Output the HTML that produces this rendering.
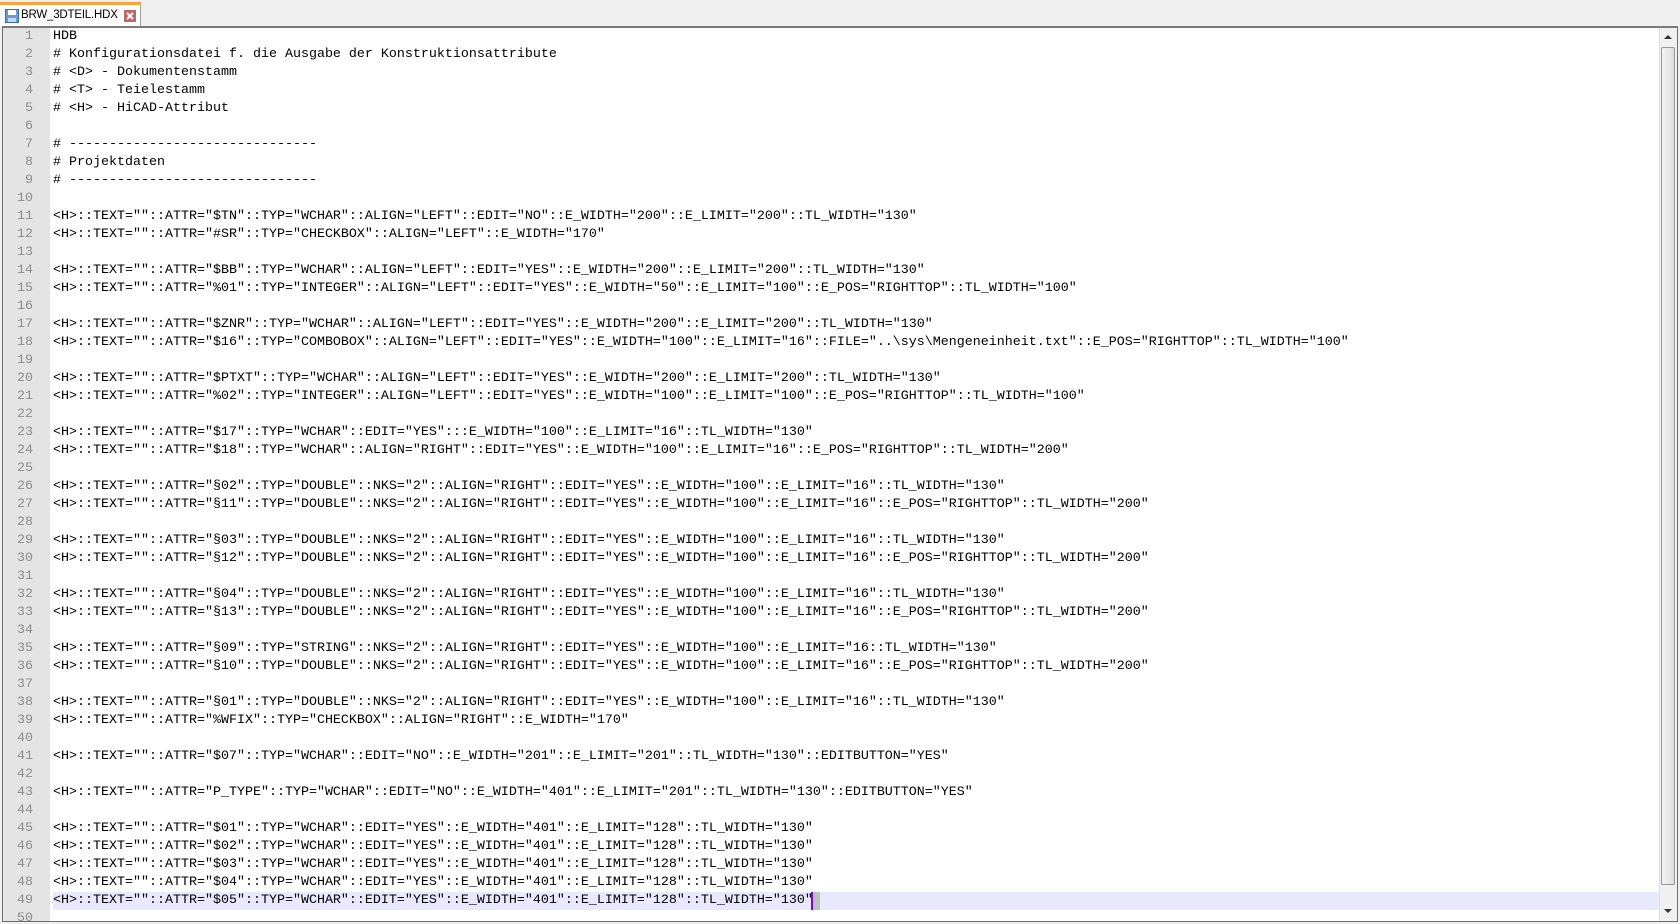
<!DOCTYPE html>
<html><head><meta charset="utf-8">
<style>
html,body{margin:0;padding:0;width:1680px;height:924px;overflow:hidden;background:#f0f0f0;font-family:"Liberation Sans",sans-serif}
#tab{position:absolute;left:0;top:2px;width:141px;height:24px;background:#fff;border-right:1px solid #a0a0a0;box-sizing:border-box}
#tab .o{position:absolute;left:0;top:0;width:141px;height:3px;background:#f7a23a}
#tab .t{position:absolute;left:21px;top:7px;font-size:11.5px;letter-spacing:-0.2px;color:#000;white-space:nowrap}
#ed{position:absolute;left:2px;top:26px;width:1676px;height:896px;border:1px solid #6d6d6d;border-top:2px solid #7a7a7a;background:#fff;box-sizing:border-box;overflow:hidden}
#mg{position:absolute;left:0;top:0;width:47px;height:100%;background:#e4e4e4}
.ln{position:absolute;left:0;width:30px;text-align:right;color:#8c8c8c;font:13.33px/18px "Liberation Mono",monospace}
.tx{position:absolute;left:50px;white-space:pre;color:#000;font:13.33px/18px "Liberation Mono",monospace}
#hl{position:absolute;left:50px;top:864px;width:1606px;height:18px;background:#e8e8ff}
#sb{position:absolute;right:0;top:0;width:17px;height:100%;background:#f0f0f0;border-left:1px solid #e0e0e0}
#th{position:absolute;left:1px;top:19px;width:14px;height:838px;background:linear-gradient(90deg,#f4f4f4,#dcdcdc);border:1px solid #979797;border-radius:2px;box-sizing:border-box}
</style></head><body>
<div id="tab"><div class="o"></div>
<svg style="position:absolute;left:5px;top:7px" width="14" height="14" viewBox="0 0 14 14"><rect x="0.5" y="0.5" width="13" height="13" fill="#6d9bd1" stroke="#3b6aa8"/><rect x="3" y="1" width="8" height="5" fill="#fff"/><rect x="3" y="9" width="8" height="4" fill="#c8d8ec"/></svg>
<div class="t">BRW_3DTEIL.HDX</div>
<svg style="position:absolute;left:124px;top:8px" width="12" height="12" viewBox="0 0 12 12"><rect width="12" height="12" fill="#b86a6a"/><path d="M3 3L9 9M9 3L3 9" stroke="#fff" stroke-width="2"/></svg>
</div>
<div id="ed">
<div id="mg"></div>
<div id="hl"></div>
<div id="lines"></div>
<div style="position:absolute;left:808px;top:864px;width:2px;height:18px;background:#8000ff"></div>
<div style="position:absolute;left:810px;top:864px;width:7px;height:18px;background:#c0c0c0"></div>
<div id="sb"><div style="position:absolute;left:4px;top:7px;width:0;height:0;border-left:4px solid transparent;border-right:4px solid transparent;border-bottom:4px solid #333"></div><div id="th"></div><div style="position:absolute;left:4px;top:881px;width:0;height:0;border-left:4px solid transparent;border-right:4px solid transparent;border-top:4px solid #333"></div></div>
</div>
<script>
var L=['HDB','# Konfigurationsdatei f. die Ausgabe der Konstruktionsattribute','# <D> - Dokumentenstamm','# <T> - Teielestamm','# <H> - HiCAD-Attribut','','# -------------------------------','# Projektdaten','# -------------------------------','',
'<H>::TEXT=""::ATTR="$TN"::TYP="WCHAR"::ALIGN="LEFT"::EDIT="NO"::E_WIDTH="200"::E_LIMIT="200"::TL_WIDTH="130"',
'<H>::TEXT=""::ATTR="#SR"::TYP="CHECKBOX"::ALIGN="LEFT"::E_WIDTH="170"','',
'<H>::TEXT=""::ATTR="$BB"::TYP="WCHAR"::ALIGN="LEFT"::EDIT="YES"::E_WIDTH="200"::E_LIMIT="200"::TL_WIDTH="130"',
'<H>::TEXT=""::ATTR="%01"::TYP="INTEGER"::ALIGN="LEFT"::EDIT="YES"::E_WIDTH="50"::E_LIMIT="100"::E_POS="RIGHTTOP"::TL_WIDTH="100"','',
'<H>::TEXT=""::ATTR="$ZNR"::TYP="WCHAR"::ALIGN="LEFT"::EDIT="YES"::E_WIDTH="200"::E_LIMIT="200"::TL_WIDTH="130"',
'<H>::TEXT=""::ATTR="$16"::TYP="COMBOBOX"::ALIGN="LEFT"::EDIT="YES"::E_WIDTH="100"::E_LIMIT="16"::FILE="..\\sys\\Mengeneinheit.txt"::E_POS="RIGHTTOP"::TL_WIDTH="100"','',
'<H>::TEXT=""::ATTR="$PTXT"::TYP="WCHAR"::ALIGN="LEFT"::EDIT="YES"::E_WIDTH="200"::E_LIMIT="200"::TL_WIDTH="130"',
'<H>::TEXT=""::ATTR="%02"::TYP="INTEGER"::ALIGN="LEFT"::EDIT="YES"::E_WIDTH="100"::E_LIMIT="100"::E_POS="RIGHTTOP"::TL_WIDTH="100"','',
'<H>::TEXT=""::ATTR="$17"::TYP="WCHAR"::EDIT="YES":::E_WIDTH="100"::E_LIMIT="16"::TL_WIDTH="130"',
'<H>::TEXT=""::ATTR="$18"::TYP="WCHAR"::ALIGN="RIGHT"::EDIT="YES"::E_WIDTH="100"::E_LIMIT="16"::E_POS="RIGHTTOP"::TL_WIDTH="200"','',
'<H>::TEXT=""::ATTR="§02"::TYP="DOUBLE"::NKS="2"::ALIGN="RIGHT"::EDIT="YES"::E_WIDTH="100"::E_LIMIT="16"::TL_WIDTH="130"',
'<H>::TEXT=""::ATTR="§11"::TYP="DOUBLE"::NKS="2"::ALIGN="RIGHT"::EDIT="YES"::E_WIDTH="100"::E_LIMIT="16"::E_POS="RIGHTTOP"::TL_WIDTH="200"','',
'<H>::TEXT=""::ATTR="§03"::TYP="DOUBLE"::NKS="2"::ALIGN="RIGHT"::EDIT="YES"::E_WIDTH="100"::E_LIMIT="16"::TL_WIDTH="130"',
'<H>::TEXT=""::ATTR="§12"::TYP="DOUBLE"::NKS="2"::ALIGN="RIGHT"::EDIT="YES"::E_WIDTH="100"::E_LIMIT="16"::E_POS="RIGHTTOP"::TL_WIDTH="200"','',
'<H>::TEXT=""::ATTR="§04"::TYP="DOUBLE"::NKS="2"::ALIGN="RIGHT"::EDIT="YES"::E_WIDTH="100"::E_LIMIT="16"::TL_WIDTH="130"',
'<H>::TEXT=""::ATTR="§13"::TYP="DOUBLE"::NKS="2"::ALIGN="RIGHT"::EDIT="YES"::E_WIDTH="100"::E_LIMIT="16"::E_POS="RIGHTTOP"::TL_WIDTH="200"','',
'<H>::TEXT=""::ATTR="§09"::TYP="STRING"::NKS="2"::ALIGN="RIGHT"::EDIT="YES"::E_WIDTH="100"::E_LIMIT="16::TL_WIDTH="130"',
'<H>::TEXT=""::ATTR="§10"::TYP="DOUBLE"::NKS="2"::ALIGN="RIGHT"::EDIT="YES"::E_WIDTH="100"::E_LIMIT="16"::E_POS="RIGHTTOP"::TL_WIDTH="200"','',
'<H>::TEXT=""::ATTR="§01"::TYP="DOUBLE"::NKS="2"::ALIGN="RIGHT"::EDIT="YES"::E_WIDTH="100"::E_LIMIT="16"::TL_WIDTH="130"',
'<H>::TEXT=""::ATTR="%WFIX"::TYP="CHECKBOX"::ALIGN="RIGHT"::E_WIDTH="170"','',
'<H>::TEXT=""::ATTR="$07"::TYP="WCHAR"::EDIT="NO"::E_WIDTH="201"::E_LIMIT="201"::TL_WIDTH="130"::EDITBUTTON="YES"','',
'<H>::TEXT=""::ATTR="P_TYPE"::TYP="WCHAR"::EDIT="NO"::E_WIDTH="401"::E_LIMIT="201"::TL_WIDTH="130"::EDITBUTTON="YES"','',
'<H>::TEXT=""::ATTR="$01"::TYP="WCHAR"::EDIT="YES"::E_WIDTH="401"::E_LIMIT="128"::TL_WIDTH="130"',
'<H>::TEXT=""::ATTR="$02"::TYP="WCHAR"::EDIT="YES"::E_WIDTH="401"::E_LIMIT="128"::TL_WIDTH="130"',
'<H>::TEXT=""::ATTR="$03"::TYP="WCHAR"::EDIT="YES"::E_WIDTH="401"::E_LIMIT="128"::TL_WIDTH="130"',
'<H>::TEXT=""::ATTR="$04"::TYP="WCHAR"::EDIT="YES"::E_WIDTH="401"::E_LIMIT="128"::TL_WIDTH="130"',
'<H>::TEXT=""::ATTR="$05"::TYP="WCHAR"::EDIT="YES"::E_WIDTH="401"::E_LIMIT="128"::TL_WIDTH="130"',''];
var c=document.getElementById('lines'),h='';
function e(s){return s.replace(/&/g,'&amp;').replace(/</g,'&lt;').replace(/>/g,'&gt;');}
for(var i=0;i<L.length;i++){var t=i*18;h+='<div class="ln" style="top:'+t+'px">'+(i+1)+'</div><div class="tx" style="top:'+t+'px">'+e(L[i])+'</div>';}
c.innerHTML=h;
</script>
</body></html>
